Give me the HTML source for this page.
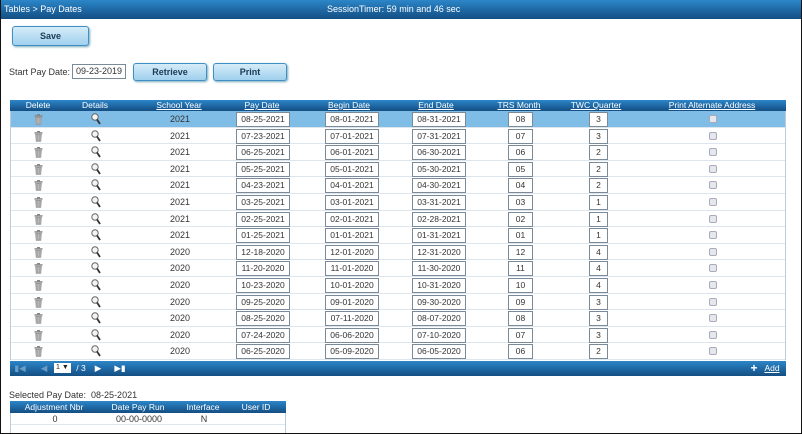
<!DOCTYPE html>
<html><head><meta charset="utf-8"><style>
*{box-sizing:border-box;margin:0;padding:0}
body{width:802px;height:434px;overflow:hidden;background:#fff;font-family:"Liberation Sans",sans-serif;font-size:9px;color:#333;position:relative}
.frame{position:absolute;left:0;top:0;width:802px;height:434px;border:1px solid #111;border-top:none}
.top{position:absolute;left:0;top:0;width:801px;height:19px;background:linear-gradient(#2c86c8,#1a5e98 70%,#154f82);color:#fff;font-size:9px}
.btn{position:absolute;border:1px solid #3f8fc4;border-radius:3px;background:linear-gradient(#d6ecf8,#9fd0ee);font-weight:bold;font-size:9px;text-align:center;color:#1b3a55;box-shadow:1px 1px 2px #7ab}
.hdr{position:absolute;background:linear-gradient(#2c86c8,#1a5e98 70%,#154f82);color:#fff;font-size:8.5px}
.hdr span{position:absolute;top:1px;transform:translateX(-50%);white-space:nowrap}
.u{text-decoration:underline}
.rows{position:absolute;left:10px;top:111px;width:776px;border-left:1px solid #bcd;border-right:1px solid #bcd}
.r{height:16.6px;position:relative;border-bottom:1px solid #dde6ee}
.r.sel{background:#7fbde6}
.c{position:absolute;top:3px;transform:translateX(-50%);white-space:nowrap}
.in{position:absolute;top:1px;height:15px;background:#fff;border:1px solid #7a8a99;text-align:center;font-size:8.5px;line-height:13px;color:#333}
.cb{position:absolute;left:698px;top:4px;width:8px;height:8px;border:1px solid #aab;border-radius:2px;background:#e4e8ec}
.tr{position:absolute;left:23px;top:3px;width:9px;height:11px}
.mg{position:absolute;left:80px;top:2px}
</style></head><body>
<div class="top"><span style="position:absolute;left:4px;top:4px">Tables &gt; Pay Dates</span><span style="position:absolute;left:327px;top:4px">SessionTimer: 59 min and 46 sec</span></div>
<div class="btn" style="left:12px;top:26px;width:77px;height:20px;line-height:18px">Save</div>
<div style="position:absolute;left:9px;top:67px">Start Pay Date:</div>
<div style="position:absolute;left:72px;top:64px;width:54px;height:15px;border:1px solid #7a8a99;text-align:center;line-height:13px">09-23-2019</div>
<div class="btn" style="left:133px;top:63px;width:74px;height:18px;line-height:16px">Retrieve</div>
<div class="btn" style="left:213px;top:63px;width:74px;height:18px;line-height:16px">Print</div>
<div class="hdr" style="left:10px;top:100px;width:776px;height:11px">
<span style="left:28px;top:0">Delete</span><span style="left:85px;top:0">Details</span><span class="u" style="left:169px;top:0">School Year</span><span class="u" style="left:252px;top:0">Pay Date</span><span class="u" style="left:339px;top:0">Begin Date</span><span class="u" style="left:426px;top:0">End Date</span><span class="u" style="left:509px;top:0">TRS Month</span><span class="u" style="left:586px;top:0">TWC Quarter</span><span class="u" style="left:702px;top:0">Print Alternate Address</span>
</div>
<div class="rows" id="rows"></div>
<div class="hdr" style="left:10px;top:361px;width:776px;height:15px">
<span style="left:10px;top:2px;color:#6a9cc4">&#9646;&#9664;</span>
<span style="left:34px;top:2px;color:#6a9cc4">&#9664;</span>
<div style="position:absolute;left:44px;top:2px;width:17px;height:10px;background:#fff;color:#222;font-size:7px;line-height:10px;padding-left:2px">1 &#9660;</div>
<span style="left:71px;top:2px">/ 3</span>
<span style="left:88px;top:2px">&#9654;</span>
<span style="left:110px;top:2px">&#9654;&#9646;</span>
<span style="left:744px;top:0;font-size:12px;font-weight:bold">+</span>
<span class="u" style="left:762px;top:2px">Add</span>
</div>
<div style="position:absolute;left:9px;top:390px">Selected Pay Date:&nbsp; 08-25-2021</div>
<div class="hdr" style="left:10px;top:401px;width:276px;height:12px">
<span style="left:44px">Adjustment Nbr</span><span style="left:128px">Date Pay Run</span><span style="left:193px">Interface</span><span style="left:246px">User ID</span></div>
<div style="position:absolute;left:10px;top:413px;width:276px;height:20px;border-left:1px solid #bcd;border-right:1px solid #bcd">
<div style="height:12px;border-bottom:1px solid #dde6ee;position:relative"><span class="c" style="left:44px;top:1px">0</span><span class="c" style="left:128px;top:1px">00-00-0000</span><span class="c" style="left:193px;top:1px">N</span></div></div>
<div class="frame"></div>
<script>
var d=[["2021","08-25-2021","08-01-2021","08-31-2021","08","3"],["2021","07-23-2021","07-01-2021","07-31-2021","07","3"],["2021","06-25-2021","06-01-2021","06-30-2021","06","2"],["2021","05-25-2021","05-01-2021","05-30-2021","05","2"],["2021","04-23-2021","04-01-2021","04-30-2021","04","2"],["2021","03-25-2021","03-01-2021","03-31-2021","03","1"],["2021","02-25-2021","02-01-2021","02-28-2021","02","1"],["2021","01-25-2021","01-01-2021","01-31-2021","01","1"],["2020","12-18-2020","12-01-2020","12-31-2020","12","4"],["2020","11-20-2020","11-01-2020","11-30-2020","11","4"],["2020","10-23-2020","10-01-2020","10-31-2020","10","4"],["2020","09-25-2020","09-01-2020","09-30-2020","09","3"],["2020","08-25-2020","07-11-2020","08-07-2020","08","3"],["2020","07-24-2020","06-06-2020","07-10-2020","07","3"],["2020","06-25-2020","05-09-2020","06-05-2020","06","2"]];
var h="";
var trash='<svg class="tr" viewBox="0 0 9 11"><rect x="0.5" y="1.2" width="8" height="1.5" fill="#888"/><rect x="3" y="0" width="3" height="1.4" fill="#888"/><path d="M1.2 3h6.6l-0.7 7.8h-5.2z" fill="#999"/><path d="M3 4v5.8M4.5 4v5.8M6 4v5.8" stroke="#ccc" stroke-width="0.6"/></svg>';
var mag='<svg class="mg" width="10" height="12" viewBox="0 0 10 12"><circle cx="4" cy="4" r="3.2" fill="#f4f4f4" stroke="#666" stroke-width="1"/><path d="M6 6.5l3 4.5" stroke="#333" stroke-width="1.8"/></svg>';
d.forEach(function(r,i){h+='<div class="r'+(i==0?' sel':'')+'">'+trash+mag+'<span class="c" style="left:169px">'+r[0]+'</span><div class="in" style="left:225px;width:54px">'+r[1]+'</div><div class="in" style="left:314px;width:54px">'+r[2]+'</div><div class="in" style="left:401px;width:54px">'+r[3]+'</div><div class="in" style="left:497px;width:25px">'+r[4]+'</div><div class="in" style="left:578px;width:19px">'+r[5]+'</div><div class="cb"></div></div>';});
document.getElementById("rows").innerHTML=h;
</script>
</body></html>
